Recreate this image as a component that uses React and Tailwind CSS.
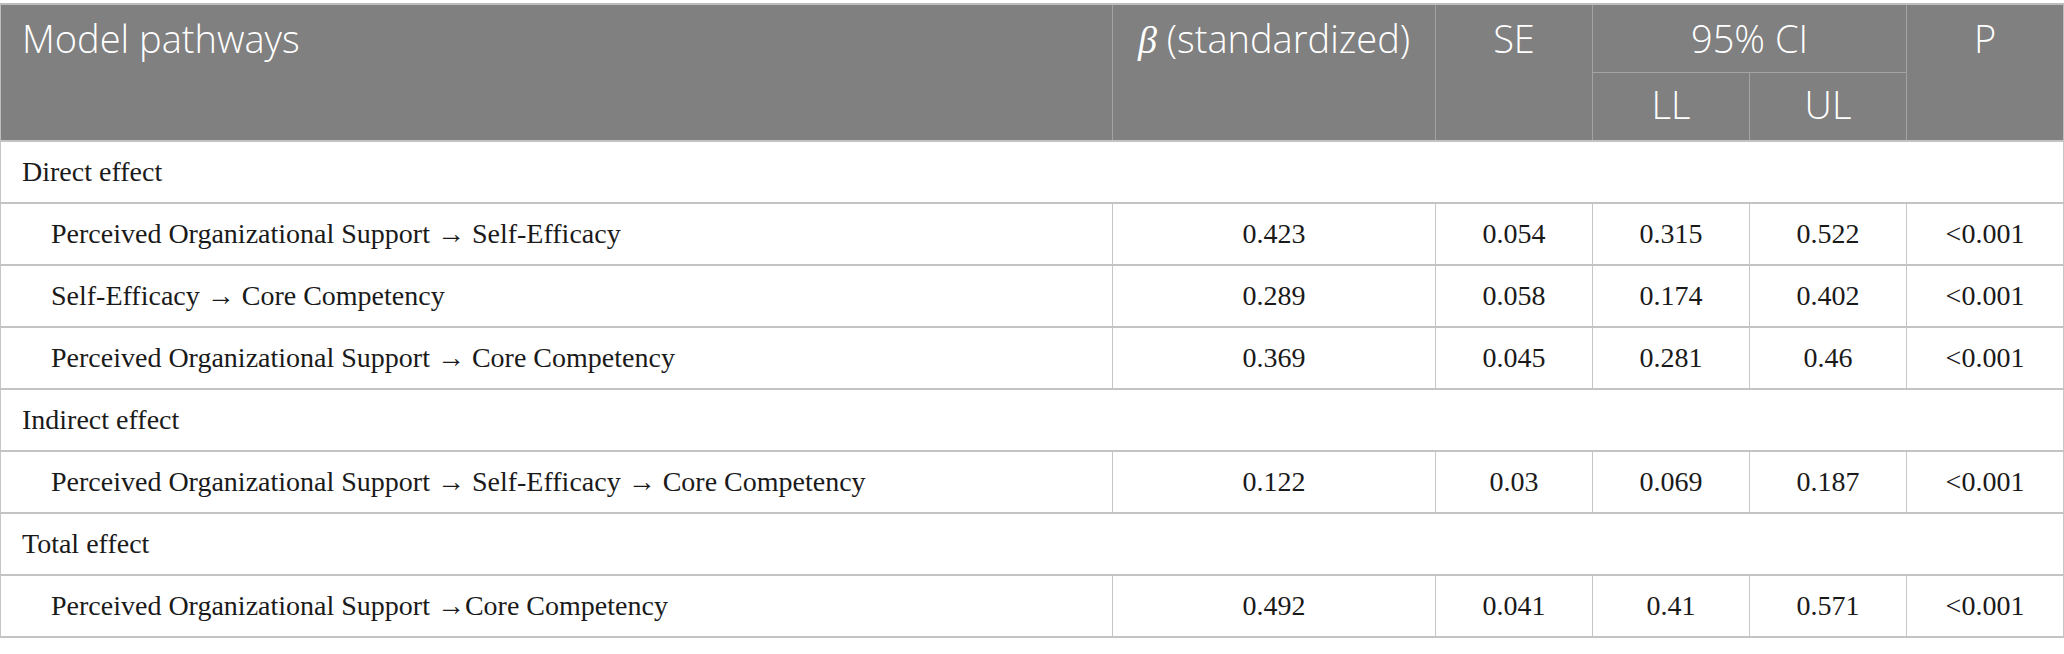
const rows = [
  { group: "Direct effect" },
  { path: "Perceived Organizational Support → Self-Efficacy", b: "0.423", se: "0.054", ll: "0.315", ul: "0.522", p: "<0.001" },
  { path: "Self-Efficacy → Core Competency", b: "0.289", se: "0.058", ll: "0.174", ul: "0.402", p: "<0.001" },
  { path: "Perceived Organizational Support → Core Competency", b: "0.369", se: "0.045", ll: "0.281", ul: "0.46", p: "<0.001" },
  { group: "Indirect effect" },
  { path: "Perceived Organizational Support → Self-Efficacy → Core Competency", b: "0.122", se: "0.03", ll: "0.069", ul: "0.187", p: "<0.001" },
  { group: "Total effect" },
  { path: "Perceived Organizational Support →Core Competency", b: "0.492", se: "0.041", ll: "0.41", ul: "0.571", p: "<0.001" },
];

const Num = ({ children }) => (
  <td className="border-x border-[#c6c6c6] text-center align-middle">
    <span className="inline-block">{children}</span>
  </td>
);

export default function App() {
  return (
    <div className="min-h-screen w-full bg-white pt-[3px]">
      <table className="w-[2063px] border-collapse table-fixed font-['Liberation_Serif',serif] text-[28px] text-[#1a1a1a]">
        <colgroup>
          <col className="w-[1112px]" />
          <col className="w-[323px]" />
          <col className="w-[157px]" />
          <col className="w-[157px]" />
          <col className="w-[157px]" />
          <col className="w-[157px]" />
        </colgroup>
        <thead className="bg-[#7f807f] text-white font-['Open_Sans',sans-serif] text-[38px] leading-[1.1]">
          <tr className="h-[68px] border-t-2 border-[#bdbdbd]">
            <th rowSpan={2} className="border border-[#a3a3a3] border-t-[#bdbdbd] border-l-[#bdbdbd] pl-[21px] pt-[13px] text-left align-top font-light">
              Model pathways
            </th>
            <th rowSpan={2} className="border border-[#a3a3a3] border-t-[#bdbdbd] pt-[13px] text-center align-top font-light">
              <span className="font-['Liberation_Serif',serif] italic">β</span> (standardized)
            </th>
            <th rowSpan={2} className="border border-[#a3a3a3] border-t-[#bdbdbd] pt-[13px] text-center align-top font-light">
              SE
            </th>
            <th colSpan={2} className="border border-[#a3a3a3] border-t-[#bdbdbd] pt-[13px] text-center align-top font-light">
              95% CI
            </th>
            <th rowSpan={2} className="border border-[#a3a3a3] border-t-[#bdbdbd] border-r-[#bdbdbd] pt-[13px] text-center align-top font-light">
              P
            </th>
          </tr>
          <tr className="h-[69px]">
            <th className="border border-[#a3a3a3] pt-[11px] text-center align-top font-light">LL</th>
            <th className="border border-[#a3a3a3] pt-[11px] text-center align-top font-light">UL</th>
          </tr>
        </thead>
        <tbody>
          {rows.map((r, i) =>
            r.group ? (
              <tr key={i} className="h-[62px] border-y-2 border-[#c3c3c3]">
                <td colSpan={6} className="border-x border-[#c6c6c6] pl-[21px] align-middle">
                  {r.group}
                </td>
              </tr>
            ) : (
              <tr key={i} className="h-[62px] border-y-2 border-[#c3c3c3]">
                <td className="border-x border-[#c6c6c6] pl-[50px] align-middle">{r.path}</td>
                <Num>{r.b}</Num>
                <Num>{r.se}</Num>
                <Num>{r.ll}</Num>
                <Num>{r.ul}</Num>
                <Num>{r.p}</Num>
              </tr>
            )
          )}
        </tbody>
      </table>
    </div>
  );
}
